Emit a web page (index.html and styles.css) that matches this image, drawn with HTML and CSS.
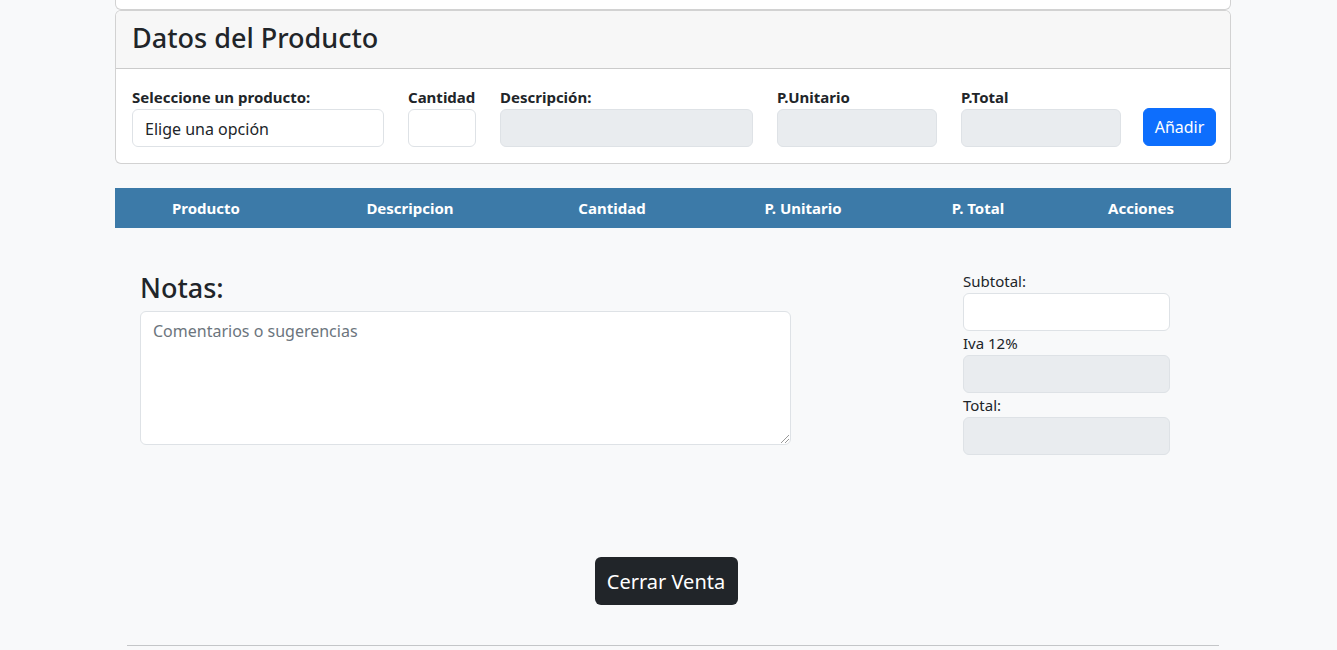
FILE: index.html
```html
<!DOCTYPE html>
<html lang="es">
<head>
<meta charset="utf-8">
<title>Venta</title>
<link rel="stylesheet" href="styles.css">
</head>
<body>
<div class="container">
  <div class="card-prev"></div>
  <div class="card">
    <div class="card-header"><h3 class="card-title">Datos del Producto</h3></div>
    <div class="card-body">
      <div class="field f-producto">
        <label class="lbl">Seleccione un producto:</label>
        <div class="control select">Elige una opción</div>
      </div>
      <div class="field f-cantidad">
        <label class="lbl">Cantidad</label>
        <div class="control"></div>
      </div>
      <div class="field f-desc">
        <label class="lbl">Descripción:</label>
        <div class="control disabled"></div>
      </div>
      <div class="field f-pu">
        <label class="lbl">P.Unitario</label>
        <div class="control disabled"></div>
      </div>
      <div class="field f-pt">
        <label class="lbl">P.Total</label>
        <div class="control disabled"></div>
      </div>
      <button class="btn-add">Añadir</button>
    </div>
  </div>

  <div class="table-head">
    <div class="th c1">Producto</div>
    <div class="th c2">Descripcion</div>
    <div class="th c3">Cantidad</div>
    <div class="th c4">P. Unitario</div>
    <div class="th c5">P. Total</div>
    <div class="th c6">Acciones</div>
  </div>

  <div class="summary">
    <div class="notes">
      <h3 class="notes-title">Notas:</h3>
      <div class="textarea">Comentarios o sugerencias<span class="grip"></span></div>
    </div>
    <div class="totals">
      <label class="tlbl">Subtotal:</label>
      <div class="control"></div>
      <label class="tlbl">Iva 12%</label>
      <div class="control disabled"></div>
      <label class="tlbl">Total:</label>
      <div class="control disabled"></div>
    </div>
  </div>

  <div class="actions">
    <button class="btn-close">Cerrar Venta</button>
  </div>
  <hr class="divider">
</div>
</body>
</html>
```
FILE: styles.css
```css
* { box-sizing: border-box; }
html, body { margin: 0; padding: 0; }
body {
  background: #f8f9fa;
  color: #212529;
  font-family: "Segoe UI", "Noto Sans", "Open Sans", sans-serif;
  font-size: 16px;
  line-height: 1.5;
}
.container {
  width: 1116px;
  margin-left: 115px;
}
.card-prev {
  height: 10px;
  background: #fff;
  border: 1px solid rgba(0,0,0,.175);
  border-top: none;
  border-radius: 0 0 6px 6px;
}
.card {
  background: #fff;
  border: 1px solid rgba(0,0,0,.175);
  border-radius: 6px;
  overflow: hidden;
}
.card-header {
  background: #f7f7f7;
  border-bottom: 1px solid rgba(0,0,0,.175);
  padding: 10px 16px 6px;
}
.card-title {
  margin: 0 0 8px;
  font-size: 27px;
  font-weight: 500;
  line-height: 33px;
}
.card-body {
  display: flex;
  align-items: flex-end;
  padding: 16px 14px 16px 16px;
}
.field { display: flex; flex-direction: column; margin-right: 24px; }
.lbl { font-weight: 700; height: 24px; font-size: 15px; padding-top: 1px; }
.f-producto { width: 252px; }
.f-cantidad { width: 68px; }
.f-desc { width: 253px; }
.f-pu { width: 160px; }
.f-pt { width: 160px; margin-right: 22px; }
.control {
  height: 38px;
  background: #fff;
  border: 1px solid #dee2e6;
  border-radius: 6px;
  padding: 7px 12px 5px;
  font-size: 16px;
}
.control.disabled { background: #e9ecef; }
.control.select { color: #212529; }
.btn-add {
  height: 38px;
  width: 73px;
  margin-bottom: 1px;
  background: #0d6efd;
  color: #fff;
  border: 1px solid #0d6efd;
  border-radius: 6px;
  font-family: inherit;
  font-size: 16px;
  padding: 0;
}
.table-head {
  margin-top: 24px;
  height: 40px;
  background: #3c7aa8;
  display: grid;
  grid-template-columns: 182px 226px 178px 204px 146px 180px;
  align-items: center;
  color: #fff;
  font-weight: 700;
}
.th { text-align: center; font-size: 15px; padding-top: 1px; }
.summary {
  display: flex;
  padding-left: 25px;
  margin-top: 41px;
}
.notes { width: 651px; }
.notes-title {
  margin: 0 0 8px;
  font-size: 27px;
  font-weight: 500;
  line-height: 33px;
  height: 34px;
  padding-top: 2px;
}
.textarea {
  position: relative;
  height: 134px;
  background: #fff;
  border: 1px solid #dee2e6;
  border-radius: 6px;
  padding: 7px 12px;
  color: #6c757d;
}
.grip {
  position: absolute;
  right: 1px;
  bottom: 1px;
  width: 8px;
  height: 8px;
  background: linear-gradient(135deg, transparent 45%, #999 45%, #999 52%, transparent 52%, transparent 70%, #999 70%, #999 77%, transparent 77%);
}
.totals {
  width: 207px;
  margin-left: 172px;
  display: flex;
  flex-direction: column;
}
.tlbl { height: 24px; font-size: 15px; padding-top: 1px; }
.actions {
  display: flex;
  justify-content: center;
  margin-top: 102px;
  padding-right: 14px;
}
.btn-close {
  height: 48px;
  width: 143px;
  background: #212529;
  color: #fff;
  border: none;
  border-radius: 6px;
  font-family: inherit;
  font-size: 20px;
  padding: 0;
}
.divider {
  margin: 40px 12px 0;
  border: 0;
  border-top: 1px solid #c4c6c8;
}
```
